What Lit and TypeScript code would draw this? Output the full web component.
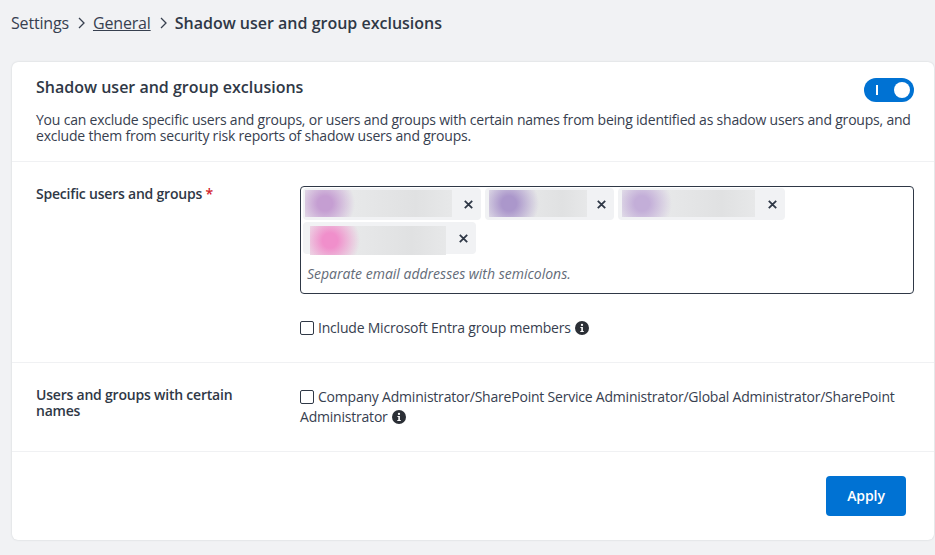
import { LitElement, html, css } from "lit";
import { customElement } from "lit/decorators.js";

const chips = [
  { w: 178, blur: 147, pl: 2, color: "#c59ed2", rowTop: 2, h: 27 },
  { w: 129, blur: 98, pl: 4, color: "#ab97cb", rowTop: 2, h: 27 },
  { w: 167, blur: 133, pl: 4, color: "#c3aed8", rowTop: 2, h: 27 },
  { w: 173, blur: 136, pl: 7, color: "#f08fcb", rowTop: 4, h: 29 },
];

const info = html`<svg class="info" viewBox="0 0 14 14" aria-hidden="true">
  <circle cx="7" cy="7" r="7" fill="#2b2f36"></circle>
  <circle cx="7" cy="3.9" r="1.15" fill="#fff"></circle>
  <path d="M5.4 6h2.5v3.9h.9v1.1H5.3V9.9h1V7.1h-.9z" fill="#fff"></path>
</svg>`;

@customElement("app-root")
export class AppRoot extends LitElement {
  static styles = css`
    :host {
      display: block;
      width: 935px;
      height: 555px;
      overflow: hidden;
      box-sizing: border-box;
      background: #f1f2f4;
      padding: 0 1px 0 12px;
      font-family: "Open Sans", "Noto Sans", sans-serif;
      font-size: 14px;
      line-height: 20px;
      letter-spacing: -0.21px;
      color: #37404f;
    }
    .crumbs {
      display: flex;
      align-items: center;
      height: 46px;
      margin-left: -1px;
      margin-bottom: 16px;
      font-size: 16px;
      line-height: 22px;
      letter-spacing: -0.17px;
    }
    .crumbs a { color: #37404f; text-decoration: underline; }
    .crumbs b { font-weight: 600; color: #2f3846; letter-spacing: 0; }
    .chev { width: 24px; height: 14px; flex: none; }
    .card {
      background: #fff;
      border-radius: 6px;
      box-shadow: 0 0 2px rgba(40, 50, 60, 0.18);
      height: 478px;
      display: flex;
      flex-direction: column;
    }
    .head {
      height: 100px;
      box-sizing: border-box;
      padding: 14px 20px 0 24px;
      border-bottom: 1px solid #f0f1f3;
    }
    .head-top {
      display: flex;
      justify-content: space-between;
      align-items: flex-start;
      height: 36px;
    }
    h2 {
      margin: 0;
      font-size: 16px;
      line-height: 22px;
      font-weight: 600;
      letter-spacing: 0;
      color: #2f3846;
    }
    .toggle {
      width: 50px;
      height: 24px;
      margin-top: 2px;
      border-radius: 12px;
      background: #0072d3;
      display: flex;
      align-items: center;
      justify-content: space-between;
      box-sizing: border-box;
      padding: 0 4px 0 12px;
    }
    .toggle i { width: 2px; height: 10px; background: #fff; }
    .toggle span { width: 16px; height: 16px; border-radius: 50%; background: #fff; }
    .desc { margin: 0; line-height: 16px; }
    .row {
      display: grid;
      grid-template-columns: 264px 1fr;
      box-sizing: border-box;
      padding-right: 20px;
      padding-left: 24px;
      border-bottom: 1px solid #f0f1f3;
    }
    .r1 { height: 201px; padding-top: 24px; }
    .r2 { height: 89px; padding-top: 24px; }
    .label { font-weight: 600; line-height: 16px; padding-right: 40px; color: #2f3846; }
    .req { color: #d3222a; }
    .box {
      box-sizing: border-box;
      height: 108px;
      border: 1px solid #2f3846;
      border-radius: 4px;
      padding: 1px 2px;
      margin-bottom: 24px;
    }
    .chips { display: flex; flex-wrap: wrap; gap: 2px 4px; }
    .chip {
      height: 32px;
      box-sizing: border-box;
      background: #f1f2f4;
      border-radius: 4px;
      position: relative;
      flex: none;
    }
    .blur {
      position: absolute;
    }
    .x {
      position: absolute;
      right: 8px;
      top: 12px;
      width: 9px;
      height: 9px;
    }
    .placeholder {
      font-style: italic;
      letter-spacing: 0;
      color: #636b78;
      margin: 10px 0 0 4px;
    }
    .check {
      display: inline-block;
      box-sizing: border-box;
      width: 14px;
      height: 14px;
      border: 1px solid #2f3846;
      border-radius: 2px;
      background: #fff;
      vertical-align: -2px;
      margin-right: 4px;
    }
    .info { width: 14px; height: 14px; vertical-align: -2px; margin-left: 1px; }
    .foot {
      flex: 1;
      display: flex;
      justify-content: flex-end;
      align-items: flex-start;
      padding: 24px 28px 0 0;
    }
    button {
      width: 80px;
      height: 40px;
      border: 0;
      border-radius: 4px;
      padding: 0 0 2px;
      background: #0072d3;
      color: #fff;
      font: 600 14px "Open Sans", "Noto Sans", sans-serif;
      letter-spacing: -0.1px;
    }
  `;

  render() {
    const chev = html`<svg class="chev" viewBox="0 0 24 14"><path d="M10 2l5 5-5 5" fill="none" stroke="#37404f" stroke-width="1.3"></path></svg>`;
    return html`
      <nav class="crumbs">Settings ${chev}<a>General</a>${chev}<b>Shadow user and group exclusions</b></nav>
      <section class="card">
        <div class="head">
          <div class="head-top">
            <h2>Shadow user and group exclusions</h2>
            <div class="toggle"><i></i><span></span></div>
          </div>
          <p class="desc">You can exclude specific users and groups, or users and groups with certain names from being identified as shadow users and groups, and exclude them from security risk reports of shadow users and groups.</p>
        </div>
        <div class="row r1">
          <div class="label">Specific users and groups <span class="req">*</span></div>
          <div>
            <div class="box">
              <div class="chips">
                ${chips.map(
                  (c) => html`<div class="chip" style="width:${c.w}px">
                    <div
                      class="blur"
                      style="left:${c.pl}px;top:${c.rowTop}px;width:${c.blur}px;height:${c.h}px;background:radial-gradient(ellipse 30px 30px at 20px 50%, ${c.color} 25%, transparent 100%), linear-gradient(90deg, #ebeced, #e6e7e8 40%, #e0e1e2 75%, #e7e8e9)"
                    ></div>
                    <svg class="x" viewBox="0 0 9 9"><path d="M.8.8l7.4 7.4M8.2.8L.8 8.2" stroke="#2f3846" stroke-width="1.8"></path></svg>
                  </div>`
                )}
              </div>
              <div class="placeholder">Separate email addresses with semicolons.</div>
            </div>
            <div><span class="check"></span>Include Microsoft Entra group members ${info}</div>
          </div>
        </div>
        <div class="row r2">
          <div class="label">Users and groups with certain names</div>
          <div><span class="check"></span>Company Administrator/SharePoint Service Administrator/Global Administrator/SharePoint Administrator ${info}</div>
        </div>
        <div class="foot"><button>Apply</button></div>
      </section>
    `;
  }
}
